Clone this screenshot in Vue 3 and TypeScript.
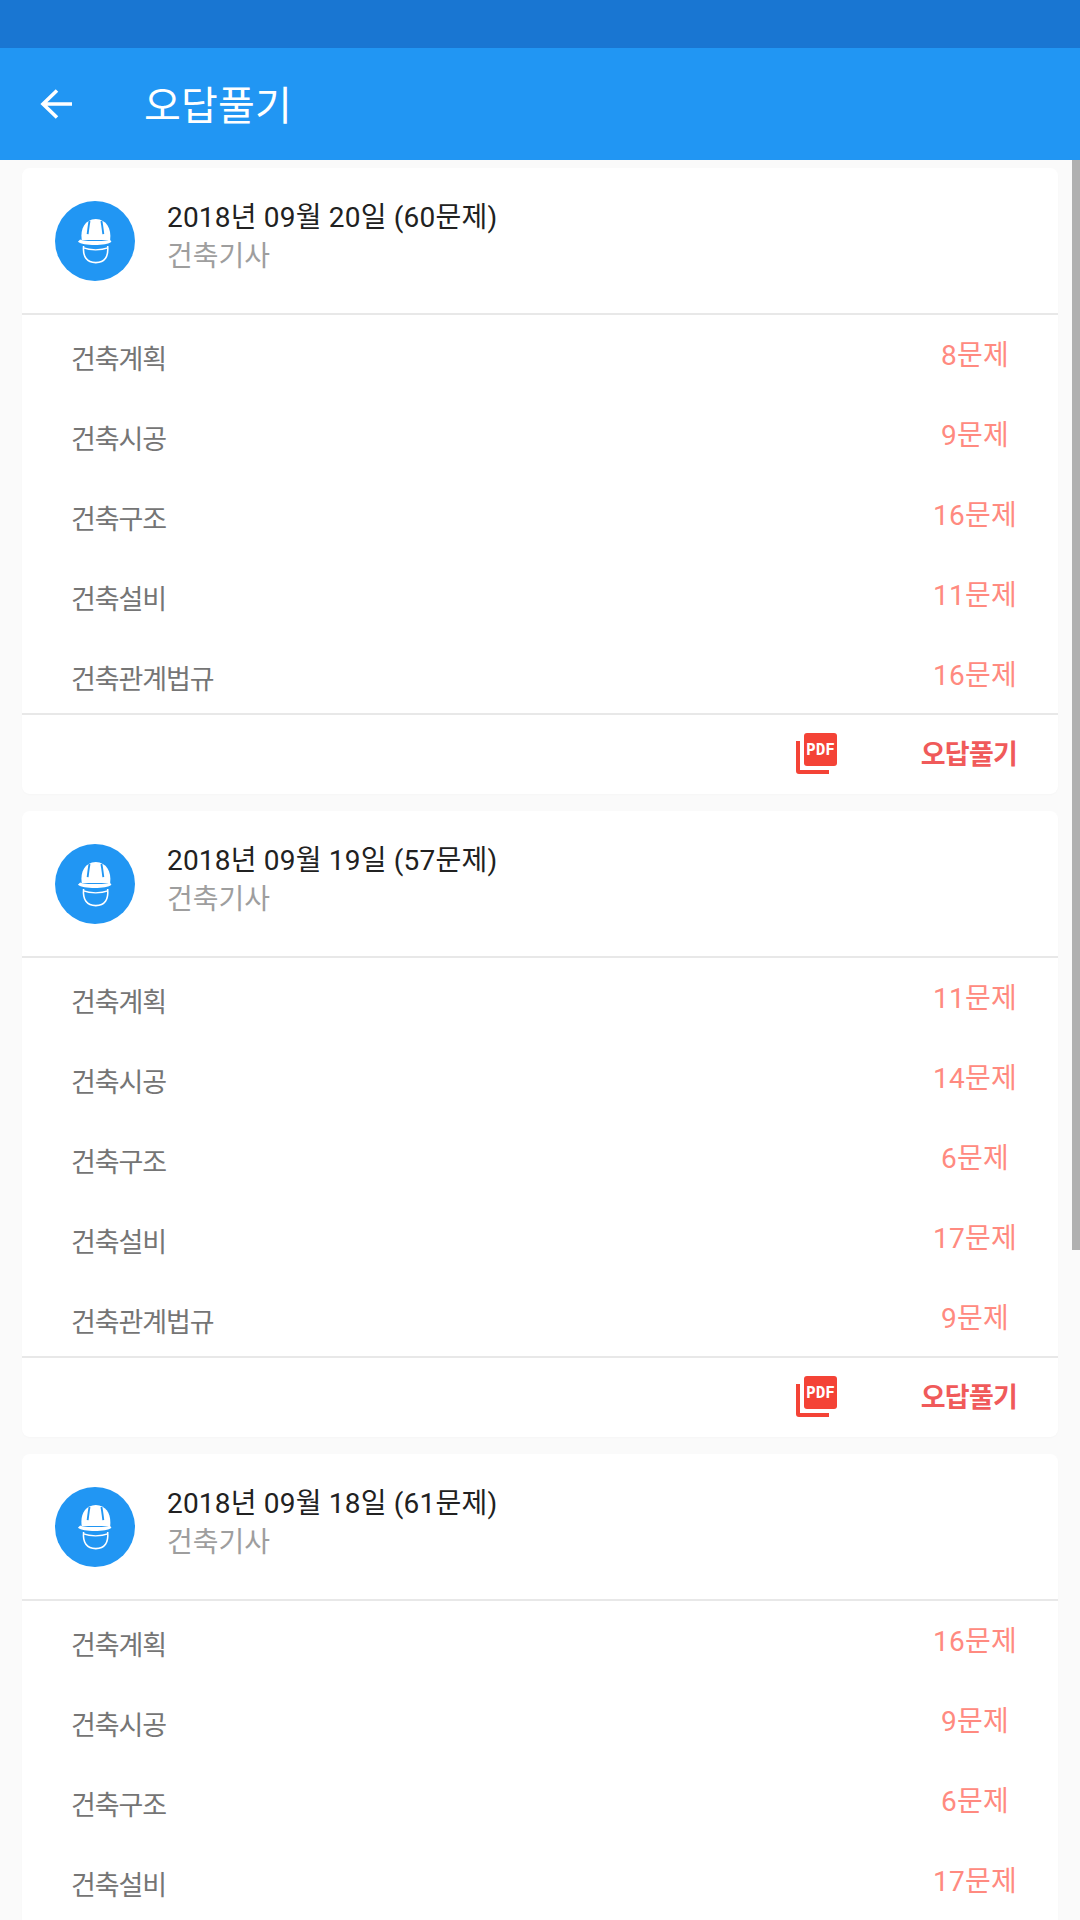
<script setup lang="ts">
interface Row { name: string; count: number }
interface Card { date: string; total: number; rows: Row[] }
const names = ['건축계획', '건축시공', '건축구조', '건축설비', '건축관계법규']
const make = (date: string, total: number, counts: number[]): Card => ({
  date, total, rows: counts.map((count, i) => ({ name: names[i], count })),
})
const cards: Card[] = [
  make('2018년 09월 20일', 60, [8, 9, 16, 11, 16]),
  make('2018년 09월 19일', 57, [11, 14, 6, 17, 9]),
  make('2018년 09월 18일', 61, [16, 9, 6, 17, 13]),
]
</script>

<template>
  <div class="page">
    <div class="status"></div>
    <header class="bar">
      <svg class="back" viewBox="0 0 32 32" width="32" height="32" fill="none" stroke="#fff" stroke-width="3.6">
        <path d="M32 16H3M17 2.5 3 16l14 13.5" />
      </svg>
      <h1 class="title">오답풀기</h1>
    </header>
    <main class="list">
      <section v-for="c in cards" :key="c.date" class="card">
        <div class="head">
          <div class="avatar">
            <svg viewBox="110 78 115 144" width="36" height="46">
              <path d="M125 147C120 110 135 82 170 80c35 2 50 30 46 67z" fill="#fff" />
              <path d="M150 86c-3 14-4 28-6 42M188 86c3 14 4 28 6 42" stroke="#2196f3" stroke-width="6" fill="none" />
              <path d="M113 152c16 14 92 14 107 0l-5-7c-15 7-80 7-95 0z" fill="#fff" />
              <path d="M131 166c-3 34 10 53 39 53s41-19 38-53" fill="none" stroke="#fff" stroke-width="5" />
              <path d="M131 172c20 8 57 8 77 0" fill="none" stroke="#fff" stroke-width="4" />
            </svg>
          </div>
          <div class="head-text">
            <div class="date">{{ c.date }} ({{ c.total }}문제)</div>
            <div class="sub">건축기사</div>
          </div>
        </div>
        <ul class="rows">
          <li v-for="r in c.rows" :key="r.name" class="row">
            <span class="name">{{ r.name }}</span>
            <span class="count">{{ r.count }}문제</span>
          </li>
        </ul>
        <div class="foot">
          <svg class="pdf" viewBox="0 0 41 41" width="41" height="41">
            <path d="M0 8h4v29h29v4H3a3 3 0 0 1-3-3z" fill="#f44336" />
            <rect x="8" y="0" width="33" height="33" rx="3" fill="#f44336" />
            <text x="24.5" y="22" text-anchor="middle" class="pdf-text">PDF</text>
          </svg>
          <span class="action">오답풀기</span>
        </div>
      </section>
    </main>
    <div class="scroll"></div>
  </div>
</template>

<style>
html, body { margin: 0; background: #fafafa; }
</style>

<style scoped>
.page {
  position: relative;
  width: 1080px;
  height: 1920px;
  overflow: hidden;
  background: #fafafa;
  font-family: Roboto, "Noto Sans CJK KR", sans-serif;
}
.status { height: 48px; background: #1976d2; }
.bar {
  height: 112px;
  background: #2196f3;
  display: flex;
  align-items: center;
  padding-left: 40px;
  box-sizing: border-box;
}
.back { flex: none; }
.title {
  margin: -3px 0 0 72px;
  font-size: 40px;
  font-weight: 400;
  color: #fff;
  letter-spacing: 0.2px;
}
.list {
  padding: 8px 22px 0;
  display: flex;
  flex-direction: column;
  gap: 17px;
}
.card {
  flex: none;
  height: 626px;
  background: #fff;
  border-radius: 8px;
  box-shadow: 0 1px 2px rgba(0, 0, 0, 0.02);
  display: flex;
  flex-direction: column;
}
.head {
  height: 145px;
  flex: none;
  display: flex;
  align-items: center;
  padding-left: 33px;
  border-bottom: 2px solid #e8e8e8;
}
.avatar {
  width: 80px;
  height: 80px;
  border-radius: 50%;
  background: #2196f3;
  display: flex;
  align-items: center;
  justify-content: center;
  flex: none;
}
.head-text { margin-left: 32px; margin-top: -5px; }
.date { font-size: 28px; line-height: 38px; color: #212121; letter-spacing: 0.2px; }
.sub { font-size: 28px; line-height: 40px; color: #9e9e9e; letter-spacing: 0; }
.rows {
  list-style: none;
  margin: 0;
  padding: 2px 0 0;
  flex: none;
  height: 398px;
  box-sizing: border-box;
}
.row {
  height: 80px;
  display: flex;
  align-items: center;
  justify-content: space-between;
  padding: 0 41px 0 49px;
}
.name { font-size: 27px; color: #757575; letter-spacing: -1.1px; }
.count {
  width: 84px;
  text-align: center;
  font-size: 28px;
  color: #ff8a80;
  letter-spacing: 0.2px;
  margin-top: -8px;
  white-space: nowrap;
}
.foot {
  flex: 1;
  border-top: 2px solid #e8e8e8;
  display: flex;
  align-items: center;
  justify-content: flex-end;
  padding-right: 41px;
}
.pdf { margin-right: 84px; margin-top: -2px; }
.pdf-text { font: 700 16px "DejaVu Sans Mono", monospace; fill: #fff; }
.action { font-size: 27px; font-weight: 700; color: #f05a5a; letter-spacing: -0.8px; margin-top: -4px; }
.scroll {
  position: absolute;
  right: 0;
  top: 160px;
  width: 8px;
  height: 1090px;
  background: #b0b0b0;
}
</style>
